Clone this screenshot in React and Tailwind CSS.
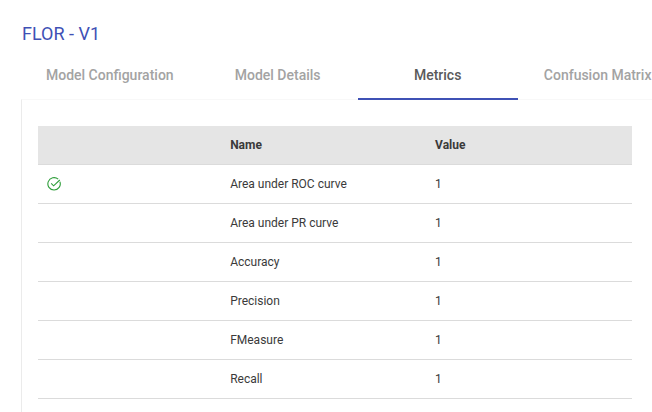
import { useState } from "react";

const tabs = ["Model Configuration", "Model Details", "Metrics", "Confusion Matrix"];

const metrics = [
  { name: "Area under ROC curve", value: 1, selected: true },
  { name: "Area under PR curve", value: 1 },
  { name: "Accuracy", value: 1 },
  { name: "Precision", value: 1 },
  { name: "FMeasure", value: 1 },
  { name: "Recall", value: 1 },
];

function CheckIcon() {
  return (
    <svg
      viewBox="0 0 14 14"
      className="block w-[14px] h-[14px] text-[#2e9e3a]"
      fill="none"
      stroke="currentColor"
      strokeWidth="1.1"
      role="img"
      aria-label="Selected metric"
    >
      <path d="M12.9 4.7A6.2 6.2 0 1 1 11.2 2.2" />
      <path d="M4.2 6.4L6.6 8.8L12.8 3" />
    </svg>
  );
}

function App() {
  const [active, setActive] = useState("Metrics");

  return (
    <div className="min-h-screen bg-white overflow-hidden font-[Roboto,sans-serif] text-[#3a3a3a]">
      <h1 className="pl-[22px] pt-[22px] text-lg leading-6 text-[#3f51b5]">FLOR - V1</h1>

      {/* --- Tabs --- */}
      <div role="tablist" className="flex ml-[22px] mt-[5px]">
        {tabs.map(tab => (
          <button
            key={tab}
            role="tab"
            type="button"
            aria-selected={active === tab}
            onClick={() => setActive(tab)}
            className={`shrink-0 min-w-40 h-[49px] px-6 text-sm font-medium border-b-2 ${
              active === tab ? "border-[#3f51b5] text-[#5a5a5a]" : "border-transparent text-[#a3a3a3]"
            }`}
          >
            {tab}
          </button>
        ))}
      </div>

      {/* --- Metrics --- */}
      <div role="tabpanel" className="-mt-px ml-[21px] pl-4 pr-5 pt-[26px] min-h-[calc(100vh-99px)] border-l border-t border-l-[#ebebeb] border-t-[#f8f8f8]">
        <table className="w-full table-fixed border-separate border-spacing-0 text-xs text-left">
          <thead>
            <tr className="h-[39px] bg-[#e5e5e5]">
              <th className="w-[31%] px-2 border-b border-[#dbdbdb]" aria-label="Selected"></th>
              <th className="w-[34%] px-2 border-b border-[#dbdbdb] font-bold">Name</th>
              <th className="px-[11px] border-b border-[#dbdbdb] font-bold">Value</th>
            </tr>
          </thead>
          <tbody>
            {metrics.map(m => (
              <tr key={m.name} className="h-[39px]">
                <td className="px-[9px] border-b border-[#dbdbdb]">{m.selected && <CheckIcon />}</td>
                <td className="px-2 border-b border-[#dbdbdb]">{m.name}</td>
                <td className="px-[11px] border-b border-[#dbdbdb]">{m.value}</td>
              </tr>
            ))}
          </tbody>
        </table>
      </div>
    </div>
  );
}

export default App;
